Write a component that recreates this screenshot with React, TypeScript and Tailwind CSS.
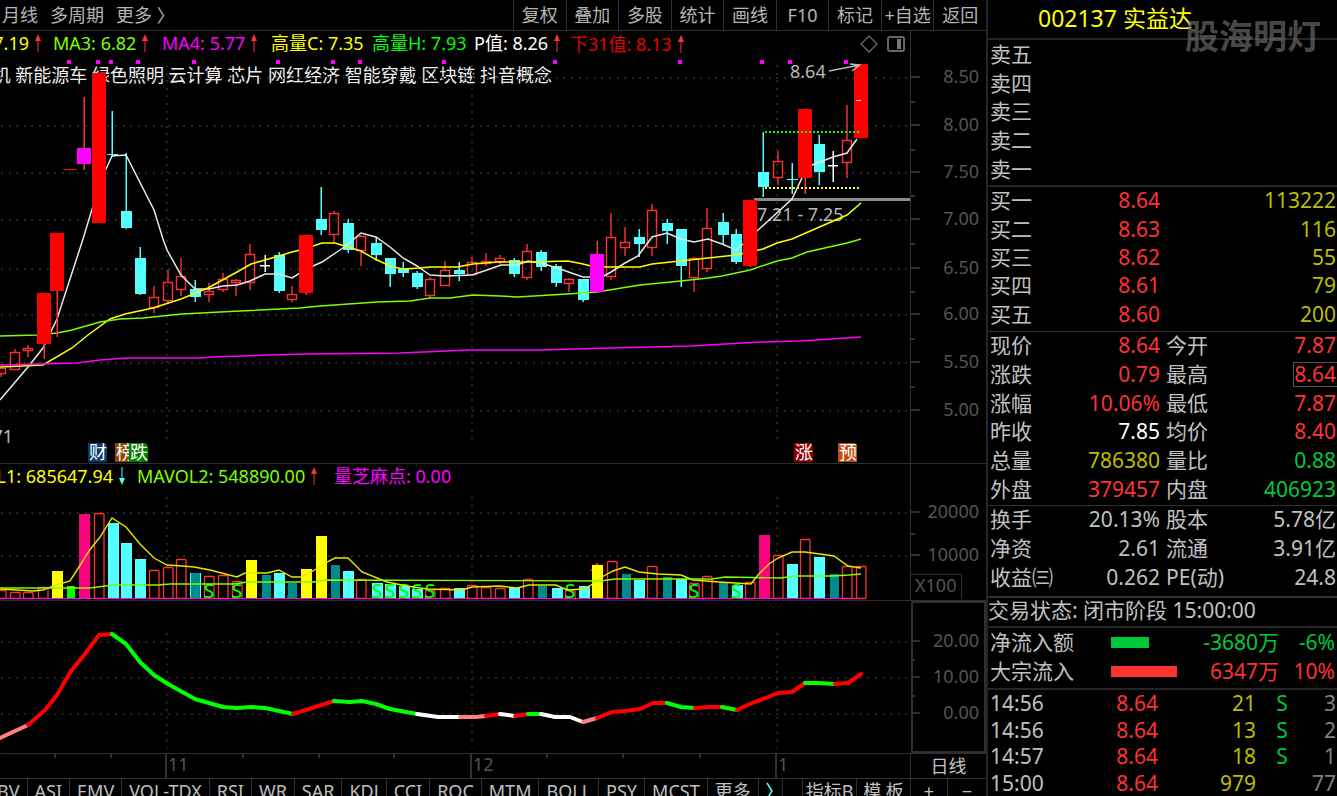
import React from 'react';

type CandleKind = 'up' | 'down' | 'limit' | 'flag' | 'flat';
type Candle = [kind: CandleKind, x: number, high: number, top: number, bottom: number, low: number];
type VolumeKind = 'up' | 'down' | 'teal' | 'yellow' | 'pink' | 'green';
type VolumeBar = [kind: VolumeKind, x: number, top: number];

const RED = '#ff3232';
const CYAN = '#54ffff';
const GRID = '#242424';
const AXIS = '#303030';
const AXIS_TEXT = '#555555';
const MONTHS = [167, 472, 777];

const periods = ['月线', '多周期', '更多 〉'];
const tools = ['复权', '叠加', '多股', '统计', '画线', 'F10', '标记', '+自选', '返回'];
const indicators = ['OBV', 'ASI', 'EMV', 'VOL-TDX', 'RSI', 'WR', 'SAR', 'KDJ', 'CCI', 'ROC', 'MTM', 'BOLL', 'PSY', 'MCST', '更多'];

const candles: Candle[] = [
  ['up', 1, 368, 368, 373, 377],
  ['up', 15, 349, 352, 369, 369],
  ['up', 28, 345, 348, 350, 357],
  ['limit', 44, 293, 293, 344, 359],
  ['limit', 57, 233, 233, 291, 337],
  ['limit', 70, 169, 169, 170, 170],
  ['flag', 84, 97, 148, 164, 170],
  ['limit', 99, 73, 73, 223, 223],
  ['down', 112, 111, 154, 155, 156],
  ['down', 126, 153, 211, 228, 229],
  ['down', 140, 247, 258, 294, 295],
  ['up', 154, 286, 297, 307, 313],
  ['up', 168, 270, 282, 300, 304],
  ['up', 181, 258, 276, 289, 296],
  ['down', 195, 280, 289, 297, 302],
  ['up', 209, 283, 291, 294, 302],
  ['up', 223, 273, 279, 289, 292],
  ['up', 236, 279, 280, 282, 296],
  ['up', 250, 244, 254, 282, 290],
  ['flat', 265, 255, 265, 266, 272],
  ['down', 279, 252, 255, 291, 293],
  ['up', 292, 286, 294, 299, 302],
  ['limit', 306, 235, 235, 293, 295],
  ['down', 321, 187, 219, 230, 235],
  ['up', 334, 211, 213, 234, 243],
  ['down', 348, 219, 223, 250, 253],
  ['up', 361, 235, 236, 250, 266],
  ['down', 376, 237, 243, 255, 261],
  ['down', 390, 258, 258, 274, 287],
  ['down', 403, 262, 269, 273, 277],
  ['down', 417, 271, 273, 287, 289],
  ['up', 430, 277, 279, 295, 298],
  ['up', 445, 261, 270, 285, 285],
  ['down', 459, 262, 270, 274, 281],
  ['up', 472, 257, 262, 274, 274],
  ['up', 486, 253, 261, 263, 266],
  ['up', 500, 255, 258, 261, 264],
  ['down', 514, 258, 260, 274, 277],
  ['up', 527, 244, 251, 277, 280],
  ['down', 541, 250, 252, 267, 271],
  ['down', 556, 264, 266, 283, 287],
  ['up', 569, 278, 279, 283, 292],
  ['down', 583, 279, 279, 300, 302],
  ['flag', 597, 241, 254, 292, 292],
  ['up', 611, 213, 237, 276, 280],
  ['up', 625, 227, 242, 247, 256],
  ['down', 639, 229, 237, 244, 257],
  ['up', 652, 204, 210, 247, 256],
  ['down', 667, 219, 223, 231, 244],
  ['down', 681, 229, 229, 266, 287],
  ['up', 694, 257, 258, 277, 292],
  ['up', 707, 208, 228, 268, 272],
  ['down', 723, 213, 222, 235, 245],
  ['down', 736, 229, 234, 262, 264],
  ['limit', 750, 200, 200, 266, 267],
  ['down', 763, 132, 172, 187, 197],
  ['up', 778, 151, 161, 177, 185],
  ['down', 792, 163, 179, 180, 194],
  ['limit', 805, 109, 109, 178, 194],
  ['down', 819, 135, 144, 172, 185],
  ['flat', 833, 151, 165, 166, 182],
  ['up', 847, 105, 140, 162, 178],
  ['limit', 861, 64, 64, 138, 138],
];

const averages = [
  {
    color: '#e8e8e8',
    points:
      '0,400 28,367 43,348 57,319 83,239 93,206 106,169 112,156 126,155 154,210 163,239 167,250 181,275 195,289 209,289 223,286 237,285 250,281 265,274 279,274 292,278 300,273 313,266 322,262 334,254 347,245 361,233 376,237 390,247 403,258 417,266 430,275 445,276 472,275 487,270 501,265 517,265 528,261 541,263 557,268 583,277 591,277 604,276 611,272 625,263 638,256 652,237 667,233 681,239 694,242 708,239 722,244 736,250 743,244 757,231 792,199 802,178 812,165 833,157 847,153 857,139',
  },
  {
    color: '#ffff00',
    points:
      '0,367 43,365 72,348 88,335 110,319 125,314 153,308 181,299 208,288 237,272 251,264 265,260 292,252 300,250 313,246 322,243 335,243 361,251 375,259 390,266 403,269 420,268 430,267 457,267 473,264 497,262 533,262 568,261 583,264 591,266 607,267 640,267 652,264 736,255 763,249 777,243 792,239 847,215 861,203',
  },
  {
    color: '#80ff00',
    points:
      '0,336 37,335 57,333 72,330 100,322 120,319 143,318 182,314 240,311 300,308 320,306 377,302 410,301 430,298 450,298 473,295 500,296 517,297 567,294 597,292 640,285 681,281 708,278 722,276 750,270 777,261 792,258 807,252 847,243 861,239',
  },
  {
    color: '#ff00ff',
    points: '0,365 77,363 100,360 127,358 200,358 213,357 267,355 307,354 400,353 470,350 540,350 610,348 690,346 760,342 800,341 861,337',
  },
];

const signals = [69, 98, 111, 138, 194, 278, 333, 360, 444, 555, 680, 762, 790, 846];

const volumes: VolumeBar[] = [
  ['up', 1, 590], ['up', 15, 592], ['up', 28, 592], ['up', 43, 587], ['yellow', 57, 571], ['green', 71, 586],
  ['pink', 84, 514], ['up', 99, 513], ['down', 113, 523], ['down', 126, 543], ['down', 140, 559], ['up', 154, 570],
  ['up', 168, 567], ['up', 181, 559], ['teal', 195, 573], ['up', 209, 576], ['up', 223, 575], ['up', 237, 581],
  ['yellow', 251, 560], ['teal', 266, 575], ['down', 279, 573], ['teal', 292, 583], ['yellow', 306, 569],
  ['yellow', 321, 536], ['teal', 335, 565], ['down', 348, 571], ['up', 361, 579], ['down', 377, 583],
  ['down', 390, 584], ['down', 404, 586], ['down', 417, 589], ['up', 430, 590], ['up', 445, 588], ['down', 459, 588],
  ['up', 472, 585], ['up', 486, 587], ['up', 500, 588], ['down', 514, 588], ['up', 528, 579], ['teal', 542, 586],
  ['down', 557, 588], ['up', 570, 590], ['down', 584, 586], ['yellow', 597, 565], ['up', 612, 561], ['teal', 626, 574],
  ['down', 639, 580], ['up', 652, 566], ['teal', 667, 577], ['down', 681, 579], ['up', 694, 583], ['up', 707, 576],
  ['teal', 723, 583], ['down', 737, 585], ['up', 750, 582], ['pink', 764, 535], ['up', 778, 555], ['down', 792, 564],
  ['up', 805, 539], ['down', 819, 557], ['teal', 834, 574], ['up', 847, 566], ['up', 861, 566],
];

const volumeFill: Record<VolumeKind, string> = {
  up: '#000000',
  down: CYAN,
  teal: '#008b8b',
  yellow: '#ffff00',
  pink: '#ff0080',
  green: '#00ff00',
};

const volumeMarks = [195, 209, 237, 292, 377, 390, 404, 417, 430, 570, 694, 736];

const volumeAverages = [
  {
    color: '#e8e800',
    points:
      '0,589 33,591 43,590 56,585 70,581 79,567 89,551 100,537 112,518 126,527 140,544 154,558 167,565 182,566 194,567 210,570 237,577 245,573 255,573 267,573 279,570 292,577 301,577 313,571 327,562 335,558 348,558 362,572 387,582 407,586 427,589 462,590 472,587 500,586 517,588 529,585 556,585 567,590 584,589 591,585 602,577 613,571 625,567 639,572 658,574 681,575 693,580 719,582 751,584 758,575 769,564 778,558 792,552 805,552 820,554 834,556 848,566 861,568',
  },
  {
    color: '#80ff00',
    points:
      '0,588 90,588 113,585 158,585 170,584 233,584 248,582 313,582 325,580 601,581 615,579 712,579 725,577 781,578 794,576 832,576 849,575 861,574',
  },
];

const trend = [
  { color: '#ff8080', points: '0,738 28,725' },
  { color: '#ff0000', points: '28,725 45,710 57,695 71,671 85,654 99,635 112,634' },
  { color: '#00ff00', points: '112,634 126,644 140,662 154,675 168,684 195,699 209,703 223,707 237,708 251,707 265,708 279,711 293,714' },
  { color: '#ff0000', points: '293,714 334,701' },
  { color: '#00ff00', points: '334,701 350,702 362,701 376,704 390,709 417,714' },
  { color: '#ffffff', points: '417,714 438,717 460,717' },
  { color: '#ff8080', points: '460,717 476,717 486,716' },
  { color: '#ff0000', points: '486,716 500,714' },
  { color: '#ffffff', points: '500,714 515,716' },
  { color: '#ff0000', points: '515,716 528,714' },
  { color: '#00ff00', points: '528,714 541,714' },
  { color: '#ffffff', points: '541,714 555,717 570,717 583,722' },
  { color: '#ff8080', points: '583,722 597,718' },
  { color: '#ff0000', points: '597,718 612,712 625,711 640,709 653,703 667,703' },
  { color: '#00ff00', points: '667,703 681,707 695,708' },
  { color: '#ff0000', points: '695,708 709,707 722,707' },
  { color: '#00ff00', points: '722,707 737,710' },
  { color: '#ff0000', points: '737,710 750,704 778,693 792,692 805,683' },
  { color: '#00ff00', points: '805,683 818,683 835,684' },
  { color: '#ff0000', points: '835,684 848,683 861,674' },
];

const tags = [
  { x: 88, text: '财', fill: '#0b3a70' },
  { x: 115, text: '榜', fill: '#8a4500' },
  { x: 129, text: '跌', fill: '#008000' },
  { x: 794, text: '涨', fill: '#8b0000' },
  { x: 838, text: '预', fill: '#c04c10' },
];

const asks = ['卖五', '卖四', '卖三', '卖二', '卖一'];
const bids = [
  ['买一', '8.64', '113222'],
  ['买二', '8.63', '116'],
  ['买三', '8.62', '55'],
  ['买四', '8.61', '79'],
  ['买五', '8.60', '200'],
];

type QuoteRow = [string, string, string, string, string, string];
const redText = 'text-[#ff3232]';
const greenText = 'text-[#00c83c]';
const yellowText = 'text-[#bcbc00]';
const grayText = 'text-[#c0c0c0]';

const quotes: QuoteRow[] = [
  ['现价', '8.64', redText, '今开', '7.87', redText],
  ['涨跌', '0.79', redText, '最高', '8.64', redText],
  ['涨幅', '10.06%', redText, '最低', '7.87', redText],
  ['昨收', '7.85', 'text-white', '均价', '8.40', redText],
  ['总量', '786380', yellowText, '量比', '0.88', greenText],
  ['外盘', '379457', redText, '内盘', '406923', greenText],
];

const fundamentals: QuoteRow[] = [
  ['换手', '20.13%', grayText, '股本', '5.78亿', grayText],
  ['净资', '2.61', grayText, '流通', '3.91亿', grayText],
  ['收益㈢', '0.262', grayText, 'PE(动)', '24.8', grayText],
];

const trades = [
  ['14:56', '8.64', '21', 'S', '3'],
  ['14:56', '8.64', '13', 'S', '2'],
  ['14:57', '8.64', '18', 'S', '1'],
  ['15:00', '8.64', '979', '', '77'],
];

const TrendArrow = ({ down = false }: { down?: boolean }) => (
  <svg width="6" height="18" viewBox="0 0 6 18" className="shrink-0" fill={down ? CYAN : RED}>
    {down ? <path d="M2.5 0h1v11H6L3 18 0 11h2.5z" /> : <path d="M2.5 18h1V7H6L3 0 0 7h2.5z" />}
  </svg>
);

interface LegendProps {
  text: string;
  className: string;
  arrow?: 'up' | 'down';
}

const Legend: React.FC<LegendProps> = ({ text, className, arrow }) => (
  <span className={`flex items-center gap-1.5 whitespace-nowrap ${className}`}>
    {text}
    {arrow && <TrendArrow down={arrow === 'down'} />}
  </span>
);

const Grid = ({ rows, top, bottom }: { rows: number[]; top: number; bottom: number }) => (
  <g stroke={GRID} strokeWidth="2" strokeDasharray="2 5.6">
    {rows.map((y) => (
      <line key={y} x1="1" x2="908" y1={y} y2={y} />
    ))}
    {MONTHS.map((x) => (
      <line key={x} x1={x} x2={x} y1={top} y2={bottom} />
    ))}
  </g>
);

const Axis = ({ labels, minors }: { labels: [string, number][]; minors: number[] }) => (
  <>
    <g stroke={AXIS} strokeWidth="2">
      {labels.map(([text, y]) => (
        <line key={text} x1="911" x2="920" y1={y} y2={y} />
      ))}
      {minors.map((y) => (
        <line key={y} x1="911" x2="915" y1={y} y2={y} />
      ))}
    </g>
    <g fill={AXIS_TEXT} fontSize="18" textAnchor="end">
      {labels.map(([text, y]) => (
        <text key={text} x="979" y={y + 6}>{text}</text>
      ))}
    </g>
  </>
);

const CandleShape = ({ candle }: { candle: Candle }) => {
  const [kind, x, high, top, bottom, low] = candle;
  if (kind === 'flat') {
    return <path d={`M${x - 5} ${top}h10v1.5h-10zM${x - 0.5} ${high}h1.5V${low}h-1.5z`} fill="#ffffff" shapeRendering="auto" />;
  }
  if (kind === 'up') {
    return (
      <g stroke={RED} strokeWidth="1.4" fill="none" shapeRendering="auto">
        <path d={`M${x} ${high}V${top}M${x} ${bottom}V${low}`} />
        <rect x={x - 4.5} y={top + 0.5} width="9" height={bottom - top} />
      </g>
    );
  }
  const half = kind === 'down' ? 5 : 7;
  const fill = kind === 'down' ? CYAN : kind === 'flag' ? '#ff00ff' : '#ff0000';
  return (
    <g>
      <rect
        x={x - 0.5}
        y={high}
        width="1.5"
        height={low - high}
        fill={kind === 'down' ? CYAN : RED}
        shapeRendering="auto"
      />
      <rect x={x - half} y={top} width={kind === 'down' ? 11 : 14} height={bottom - top} fill={fill} />
    </g>
  );
};

const VolumeShape = ({ bar }: { bar: VolumeBar }) => {
  const [kind, x, top] = bar;
  if (kind === 'up') {
    return <rect x={x - 4.5} y={top + 0.5} width="9.5" height={598 - top} rx="1" stroke={RED} strokeWidth="1.3" shapeRendering="auto" />;
  }
  return (
    <rect
      x={kind === 'teal' || kind === 'green' ? x - 4 : x - 5}
      y={top}
      width={kind === 'green' ? 8 : kind === 'teal' ? 9 : 11}
      height={599 - top}
      fill={volumeFill[kind]}
    />
  );
};

const PriceChart = () => {
  const isBig = (candle: Candle) => candle[0] === 'limit' || candle[0] === 'flag';
  return (
    <svg viewBox="0 58 910 405" className="relative block w-full" fontSize="18" shapeRendering="crispEdges">
      <Grid rows={[78, 126, 173, 220, 269, 315, 363, 411]} top={65} bottom={442} />
      {signals.map((x) => (
        <rect key={x} x={x - 2} y="60" width="4" height="4" fill="#ff00ff" />
      ))}
      {candles.filter((candle) => !isBig(candle)).map((candle) => (
        <CandleShape key={candle[1]} candle={candle} />
      ))}
      <rect x="754" y="198" width="156" height="3" fill="#8a8a8a" />
      <text x="757" y="221" fill="#b8b8b8">7.21 - 7.25</text>
      <g fill="none" shapeRendering="auto">
        {averages.map((line) => (
          <polyline key={line.color} points={line.points} stroke={line.color} strokeWidth="1.5" />
        ))}
      </g>
      {candles.filter(isBig).map((candle) => (
        <CandleShape key={candle[1]} candle={candle} />
      ))}
      <rect x="856" y="100" width="5" height="1" fill="#ffffff" />
      <line x1="765" x2="861" y1="132" y2="132" stroke="#00ff00" strokeWidth="2" strokeDasharray="2 2" />
      <line x1="765" x2="861" y1="188" y2="188" stroke="#ffff00" strokeWidth="2" strokeDasharray="2 2" />
      <text x="790" y="78" fill="#b8b8b8">8.64</text>
      <path d="M829 71L860 65M850 64L860 65L852 71" stroke="#b8b8b8" strokeWidth="1.3" fill="none" shapeRendering="auto" />
      <text x="13" y="443" fill="#b8b8b8" textAnchor="end">71</text>
      {tags.map((tag) => (
        <g key={tag.text}>
          <path d={`M${tag.x} 443h16l3 3v16h-19z`} fill={tag.fill} />
          <text x={tag.x + 1} y="459" fill="#ffffff">{tag.text}</text>
        </g>
      ))}
    </svg>
  );
};

const VolumeChart = () => (
  <svg viewBox="0 491 910 109" className="block w-full" shapeRendering="crispEdges">
    <Grid rows={[513, 556]} top={497} bottom={598} />
    {volumes.filter((bar) => bar[0] !== 'teal').map((bar) => (
      <VolumeShape key={bar[1]} bar={bar} />
    ))}
    <path d="M590 571l7-9 7 9z" fill="#ff0000" />
    <rect x="592" y="565" width="11" height="33" fill="#ffff00" />
    <rect x="190" y="573" width="11" height="26" fill={CYAN} />
    <g fill="#00ff00" fontSize="20" fontWeight="500" textAnchor="middle">
      {volumeMarks.map((x) => (
        <text key={x} x={x} y="598">S</text>
      ))}
    </g>
    {volumes.filter((bar) => bar[0] === 'teal').map((bar) => (
      <VolumeShape key={bar[1]} bar={bar} />
    ))}
    <g fill="none" shapeRendering="auto">
      {volumeAverages.map((line) => (
        <polyline key={line.color} points={line.points} stroke={line.color} strokeWidth="1.4" />
      ))}
    </g>
    <rect x="0" y="598" width="861" height="1" fill="#ff00ff" />
  </svg>
);

const QuoteTable = ({ rows, className }: { rows: QuoteRow[]; className: string }) => (
  <table className={`w-full table-fixed whitespace-nowrap ${className}`}>
    <tbody>
      {rows.map(([label, value, color, label2, value2, color2]) => (
        <tr key={label}>
          <th className="w-[68px] p-0 pb-0.5 pl-0.5 text-left font-normal">{label}</th>
          <td className={`w-[104px] p-0 pb-0.5 text-right ${color}`}>{value}</td>
          <th className="w-[70px] p-0 pb-0.5 pl-1.5 text-left font-normal">{label2}</th>
          <td className={`p-0 pb-0.5 text-right ${color2}`}>
            <span className={label2 === '最高' ? 'inline-block border border-r-0 border-[#555] pr-px leading-[23px]' : 'pr-px'}>{value2}</span>
          </td>
        </tr>
      ))}
    </tbody>
  </table>
);

const Toolbar = () => (
  <nav className="flex h-[31px] items-center border-b border-[#303030] text-[#b4b4b4]">
    <div className="flex flex-1 gap-3 pl-0.5">
      {periods.map((period) => (
        <button key={period} type="button" className="whitespace-nowrap">{period}</button>
      ))}
    </div>
    <div className="grid h-full w-[473px] shrink-0 grid-cols-9">
      {tools.map((tool) => (
        <button key={tool} type="button" className="whitespace-nowrap border-l border-[#303030]">{tool}</button>
      ))}
    </div>
  </nav>
);

const IndicatorTabs = () => (
  <nav className="flex h-[18px] overflow-hidden border-t border-[#303030] leading-6 text-[#c0c0c0]">
    <div className="-ml-6 flex min-w-0 flex-1">
      {indicators.map((name) => (
        <button key={name} type="button" className="h-6 whitespace-nowrap border-r border-[#303030] px-[7px]">{name}</button>
      ))}
      <button type="button" aria-label="下一组" className="h-6 w-6 border-r border-[#303030]">
        <svg width="8" height="18" viewBox="0 0 8 18" className="mx-auto" fill="none" stroke={CYAN} strokeWidth="1.5">
          <path d="M1 1l5 8-5 8" />
        </svg>
      </button>
    </div>
    <div className="flex shrink-0">
      <button type="button" className="h-6 w-[54px] whitespace-nowrap border-l border-[#303030]">指标B</button>
      <button type="button" className="h-6 w-[54px] whitespace-nowrap border-l border-[#303030]">模 板</button>
      <button type="button" className="h-6 w-[37px] border-l border-[#303030]">+</button>
      <button type="button" className="h-6 w-[39px] border-l border-[#303030]">−</button>
    </div>
  </nav>
);

const ChartArea = () => (
  <main className="min-w-0 flex-1 text-[18px] leading-6">
    <Toolbar />

    <section className="flex border-b border-[#303030]">
      <div className="relative min-w-0 flex-1 overflow-hidden">
        <div className="grid h-[27px] grid-cols-[53px_109px_109px_101px_102px_96px_1fr] items-start">
          <Legend text="MA2: 7.19" className="justify-end pr-3 text-[#ffff00]" arrow="up" />
          <Legend text="MA3: 6.82" className="text-[#80ff00]" arrow="up" />
          <Legend text="MA4: 5.77" className="text-[#ff00ff]" arrow="up" />
          <Legend text="高量C: 7.35" className="text-[#ffff00]" />
          <Legend text="高量H: 7.93" className="text-[#00ff00]" />
          <Legend text="P值: 8.26" className="text-white" arrow="up" />
          <div className="flex items-center pt-px">
            <Legend text="下31值: 8.13" className="text-[#e80000]" arrow="up" />
            <svg width="46" height="18" viewBox="0 0 46 18" className="mr-1 ml-auto" fill="none" stroke="#666">
              <path d="M9 1l8 8-8 8-8-8z" strokeWidth="1.4" />
              <rect x="28" y="2" width="16" height="14" rx="2" strokeWidth="2" />
              <rect x="37" y="4" width="4" height="10" fill="#777" stroke="none" />
            </svg>
          </div>
        </div>
        <p className="absolute top-8 right-[358px] whitespace-nowrap text-[#f0f0f0]">
          无人机 新能源车 绿色照明 云计算 芯片 网红经济 智能穿戴 区块链 抖音概念
        </p>
        <PriceChart />
      </div>
      <svg width="76" height="432" viewBox="910 31 76 432" className="shrink-0">
        <rect x="910" y="31" width="1" height="432" fill={AXIS} />
        <Axis
          labels={[['8.50', 77], ['8.00', 125], ['7.50', 172], ['7.00', 219], ['6.50', 268], ['6.00', 314], ['5.50', 362], ['5.00', 410]]}
          minors={[102, 150, 196, 244, 292, 339, 387]}
        />
      </svg>
    </section>

    <section className="flex border-b border-[#303030]">
      <div className="min-w-0 flex-1 overflow-hidden">
        <div className="grid h-[27px] grid-cols-[137px_197px_1fr] items-start">
          <Legend text="MAVOL1: 685647.94" className="justify-end pr-3 text-[#ffff00]" arrow="down" />
          <Legend text="MAVOL2: 548890.00" className="text-[#80ff00]" arrow="up" />
          <Legend text="量芝麻点: 0.00" className="text-[#ff00ff]" />
        </div>
        <VolumeChart />
      </div>
      <svg width="76" height="136" viewBox="910 464 76 136" className="shrink-0">
        <rect x="910" y="464" width="1" height="136" fill={AXIS} />
        <Axis labels={[['20000', 512], ['10000', 555]]} minors={[534]} />
        <path d="M910 574.5h51.5V599" stroke={AXIS} fill="none" />
        <text x="915" y="592" fontSize="18" fill={AXIS_TEXT}>X100</text>
      </svg>
    </section>

    <section className="flex">
      <svg viewBox="0 601 910 152" className="block min-w-0 flex-1">
        <Grid rows={[642, 678, 714]} top={633} bottom={748} />
        <g fill="none" strokeWidth="4" strokeLinecap="round" strokeLinejoin="round">
          {trend.map((part) => (
            <polyline key={part.points} points={part.points} stroke={part.color} />
          ))}
        </g>
      </svg>
      <svg width="76" height="152" viewBox="910 601 76 152" className="shrink-0">
        <rect x="912" y="602" width="73" height="150" fill="none" stroke={AXIS} strokeWidth="2" />
        <Axis labels={[['20.00', 641], ['10.00', 677], ['0.00', 713]]} minors={[660, 696]} />
      </svg>
    </section>

    <section className="flex h-[25px] border-t border-[#303030]">
      <svg viewBox="0 754 910 24" className="block min-w-0 flex-1" fontSize="18" fill={AXIS_TEXT}>
        <g stroke={AXIS} strokeWidth="2">
          {[55, 111, 243, 319, 394, 547, 623, 700].map((x) => (
            <line key={x} x1={x} x2={x} y1="754" y2="758" />
          ))}
          {[166, 471, 776].map((x) => (
            <line key={x} x1={x} x2={x} y1="754" y2="778" />
          ))}
        </g>
        <text x="168" y="771">11</text>
        <text x="473" y="771">12</text>
        <text x="778" y="771">1</text>
      </svg>
      <button type="button" className="w-[76px] shrink-0 border-l border-[#303030] text-[#c0c0c0]">日线</button>
    </section>
    <IndicatorTabs />
  </main>
);

const QuotePanel = () => (
  <aside className="w-[351px] shrink-0 border-l-2 border-[#262626] text-[21px] leading-[26px] text-[#c0c0c0]">
    <header className="relative h-10 border-b-2 border-[#262626] pl-[50px]">
      <h1 className="text-[23px] leading-9 whitespace-nowrap text-[#ffff00]">002137 实益达</h1>
      <span className="absolute top-2 right-4 z-10 text-[34px] leading-[56px] font-bold whitespace-nowrap text-[#787878]/60">股海明灯</span>
    </header>

    <table className="mt-px h-[143px] w-full">
      <tbody>
        {asks.map((ask) => (
          <tr key={ask}>
            <th className="p-0 pb-0.5 pl-0.5 text-left font-normal">{ask}</th>
          </tr>
        ))}
      </tbody>
    </table>

    <table className="mt-px h-[144px] w-full table-fixed border-t-2 border-[#262626]">
      <tbody>
        {bids.map(([label, price, amount]) => (
          <tr key={label}>
            <th className="w-[68px] p-0 pb-0.5 pl-0.5 text-left font-normal">{label}</th>
            <td className="w-[104px] p-0 pb-0.5 text-right text-[#ff3232]">{price}</td>
            <td className="p-0 pr-px pb-0.5 text-right text-[#bcbc00]">{amount}</td>
          </tr>
        ))}
      </tbody>
    </table>

    <div className="mt-0.5 border-t border-[#303030] pb-px">
      <QuoteTable rows={quotes} className="h-[172px]" />
    </div>
    <div className="border-t border-[#303030] pb-1">
      <QuoteTable rows={fundamentals} className="h-[86px]" />
    </div>

    <p className="border-t-2 border-[#303030] pb-1 leading-6 whitespace-nowrap">交易状态: 闭市阶段 15:00:00</p>

    <table className="h-[60px] w-full table-fixed border-t-2 border-[#262626] whitespace-nowrap">
      <tbody>
        <tr>
          <th className="w-[123px] p-0 pb-0.5 pl-0.5 text-left font-normal">净流入额</th>
          <td className="w-[66px] p-0"><div className="h-[11px] bg-[#00c83c]" style={{ width: '57%' }} /></td>
          <td className="w-[102px] p-0 pb-0.5 text-right text-[#00c83c]">-3680万</td>
          <td className="p-0 pr-0.5 pb-0.5 text-right text-[#00c83c]">-6%</td>
        </tr>
        <tr>
          <th className="p-0 pb-0.5 pl-0.5 text-left font-normal">大宗流入</th>
          <td className="p-0"><div className="h-[11px] bg-[#ff3232]" style={{ width: '100%' }} /></td>
          <td className="p-0 pb-0.5 text-right text-[#ff3232]">6347万</td>
          <td className="p-0 pr-0.5 pb-0.5 text-right text-[#ff3232]">10%</td>
        </tr>
      </tbody>
    </table>

    <table className="mt-0.5 h-[110px] w-full table-fixed border-t-2 border-[#262626] leading-6">
      <tbody>
        {trades.map(([time, price, amount, side, count], i) => (
          <tr key={i}>
            <td className="w-[70px] p-0 pb-0.5 pl-0.5">{time}</td>
            <td className="w-[100px] p-0 pb-0.5 text-right text-[#ff3232]">{price}</td>
            <td className="w-[98px] p-0 pb-0.5 text-right text-[#bcbc00]">{amount}</td>
            <td className="w-[52px] p-0 pb-0.5 text-center text-[#00c83c]">{side}</td>
            <td className="p-0 pr-px pb-0.5 text-right text-[#808080]">{count}</td>
          </tr>
        ))}
      </tbody>
    </table>
  </aside>
);

const App: React.FC = () => {
  return (
    <div className="flex h-screen overflow-hidden bg-black font-['Noto_Sans','Noto_Sans_CJK_SC',sans-serif]">
      <ChartArea />
      <QuotePanel />
    </div>
  );
};

export default App;
